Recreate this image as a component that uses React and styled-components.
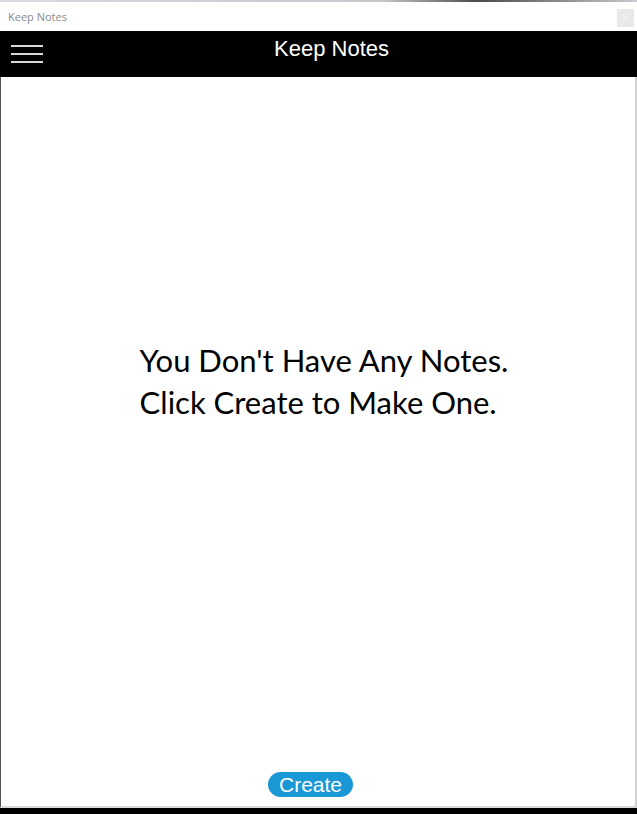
import React from "react";
import styled, { createGlobalStyle } from "styled-components";

const GlobalStyle = createGlobalStyle`
  html, body {
    margin: 0;
    padding: 0;
    background: #000;
  }
  #root {
    width: 637px;
    height: 814px;
  }
`;

function App() {
  return (
    <>
      <GlobalStyle />
      <Window>
        <TopEdge />
        <TitleBar>
          <TitleText>Keep Notes</TitleText>
          <CloseButton>x</CloseButton>
        </TitleBar>
        <Header>
          <MenuButton aria-label="menu">
            <MenuLine />
            <MenuLine />
            <MenuLine />
          </MenuButton>
          <HeaderTitle>Keep Notes</HeaderTitle>
        </Header>
        <Content>
          <EmptyMessage>
            You Don't Have Any Notes.
            <br />
            Click Create to Make One.
          </EmptyMessage>
          <CreateButton>Create</CreateButton>
        </Content>
      </Window>
    </>
  );
}

export default App;

const Window = styled.div`
  display: flex;
  flex-direction: column;
  width: 637px;
  height: 814px;
  background: #000;
`;

const TopEdge = styled.div`
  height: 2px;
  background: linear-gradient(90deg, #d6dbe2 0%, #c4c8cd 60%, #4a4a4a 75%, #c7ccd2 100%);
`;

const TitleBar = styled.div`
  display: flex;
  align-items: center;
  justify-content: space-between;
  height: 29px;
  padding: 0 3px 0 8px;
  background: #fff;
`;

const TitleText = styled.span`
  font-family: "Open Sans", "Liberation Sans", sans-serif;
  font-size: 11px;
  color: #8a8a8a;
  margin-top: -1px;
`;

const CloseButton = styled.div`
  width: 17px;
  height: 18px;
  margin-top: 2px;
  background: #e9e9e9;
  color: #f7f7f7;
  font-family: "Liberation Sans", sans-serif;
  font-size: 10px;
  display: flex;
  align-items: center;
  justify-content: center;
`;

const Header = styled.header`
  position: relative;
  display: flex;
  align-items: center;
  justify-content: center;
  height: 46px;
  background: #000;
`;

const MenuButton = styled.div`
  position: absolute;
  left: 11px;
  top: 14px;
  display: flex;
  flex-direction: column;
  gap: 6px;
  width: 32px;
`;

const MenuLine = styled.span`
  display: block;
  height: 2px;
  background: #d8d8d8;
`;

const HeaderTitle = styled.h1`
  margin: 0 0 10px 26px;
  font-family: "Liberation Sans", Arial, sans-serif;
  font-weight: normal;
  font-size: 22px;
  color: #fff;
`;

const Content = styled.main`
  flex: 1;
  display: flex;
  flex-direction: column;
  align-items: center;
  justify-content: space-between;
  background: #fff;
  border-left: 1px solid #555;
  border-right: 2px solid #d0d0d0;
  border-bottom: 2px solid #d8d8d8;
  margin-bottom: 6px;
  padding-top: 262px;
  padding-bottom: 9px;
`;

const EmptyMessage = styled.p`
  margin: 0 0 0 12px;
  font-family: Lato, "Open Sans", sans-serif;
  font-size: 31px;
  line-height: 42px;
  color: #000;
  text-align: left;
`;

const CreateButton = styled.button`
  margin-right: 15px;
  border: none;
  border-radius: 14px;
  background: #1a98d5;
  color: #fff;
  font-family: "Liberation Sans", Arial, sans-serif;
  font-size: 21px;
  line-height: 25px;
  padding: 0 11px;
  cursor: pointer;
`;
